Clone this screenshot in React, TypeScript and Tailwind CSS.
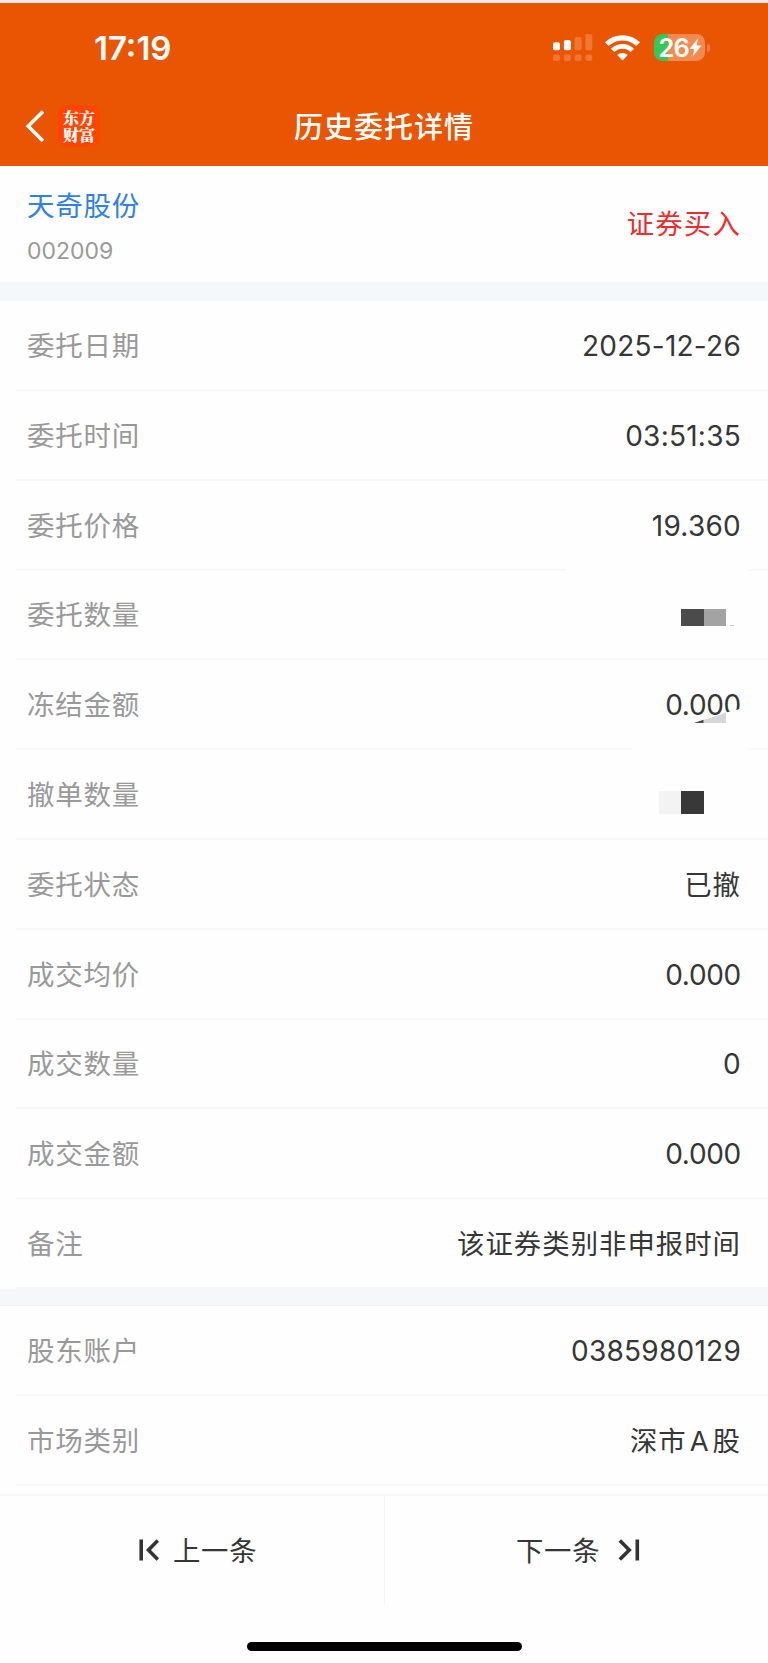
import type { ReactNode } from 'react'
import clsx from 'clsx'

interface Row {
  label: string
  value?: ReactNode
  // extra content drawn over the row (masked amounts)
  overlay?: ReactNode
}

const orderRows: Row[] = [
  { label: '委托日期', value: '2025-12-26' },
  { label: '委托时间', value: '03:51:35' },
  {
    label: '委托价格',
    value: '19.360',
    overlay: <div className="absolute right-[20px] -bottom-px w-[182px] h-[4px] bg-[#fefefe]" />,
  },
  { label: '委托数量', overlay: <QuantityMask /> },
  { label: '冻结金额', value: '0.000', overlay: <FrozenMask /> },
  { label: '撤单数量', overlay: <CancelMask /> },
  { label: '委托状态', value: '已撤' },
  { label: '成交均价', value: '0.000' },
  { label: '成交数量', value: '0' },
  { label: '成交金额', value: '0.000' },
  { label: '备注', value: '该证券类别非申报时间' },
]

const accountRows: Row[] = [
  { label: '股东账户', value: '0385980129' },
  {
    label: '市场类别',
    value: (
      <>
        深市<span className="mx-[3px]">A</span>股
      </>
    ),
  },
]

function QuantityMask() {
  return (
    <div className="absolute right-[34px] top-[38.5px] w-[53px] h-[18px]">
      <div className="flex">
        <div className="w-[22.5px] h-[16.5px] bg-[#4b4b4b]" />
        <div className="w-[22.5px] h-[16.5px] bg-[#a3a3a3]" />
      </div>
      <div className="absolute left-[49px] top-[16px] w-[4px] h-px bg-[#cfcfcf]" />
    </div>
  )
}

function FrozenMask() {
  return (
    <>
      <svg className="absolute right-[20px] top-[45.5px]" width="62" height="20" viewBox="0 0 62 20">
        <path d="M8 17 L40 6.4 L62 1 V20 H8 Z" fill="#fefefe" />
        <path d="M8 17 L40 6.8 V17 Z" fill="#d6d6d6" />
        <path d="M8 17 L17.5 13.8 V17 Z" fill="#4a4a4a" />
      </svg>
      <div className="absolute right-[20px] -bottom-px w-[116px] h-[4px] bg-[#fefefe]" />
    </>
  )
}

function CancelMask() {
  return (
    <div className="absolute right-[64.5px] top-[41px] flex">
      <div className="w-[22.5px] h-[23px] bg-[#f3f3f3]" />
      <div className="w-[22.5px] h-[23px] bg-[#383838]" />
    </div>
  )
}

function valueClass(value: ReactNode) {
  if (typeof value === 'string' && /^[\d.:-]+$/.test(value)) {
    return clsx('pt-[2px] text-[28px]', value.startsWith('0.') ? 'tracking-[-0.3px]' : 'tracking-[0.25px]')
  }
  return 'pt-[3px] text-[27.4px] tracking-[1px]'
}

function DetailRow({ label, value, overlay }: Row) {
  return (
    <div className="relative h-[89.8px] pl-4">
      <div className="h-full flex items-center justify-between pl-[11px] pr-[27px] border-b-2 border-[#f8f8f8]">
        <span className="pt-[3px] text-[27.5px] tracking-[0.75px] text-[#999999]">{label}</span>
        {value && <span className={clsx('text-[#363636]', valueClass(value))}>{value}</span>}
      </div>
      {overlay}
    </div>
  )
}

function SignalIcon() {
  return (
    <svg width="40" height="28" viewBox="0 0 40 28" fill="#fff">
      <rect x="0" y="8.3" width="7" height="8" rx="2" />
      <rect x="10.9" y="6" width="7" height="10.3" rx="2" />
      <rect x="21.6" y="3" width="7" height="13.3" rx="2" fillOpacity="0.2" />
      <rect x="32.3" y="0" width="7" height="16.3" rx="2" fillOpacity="0.2" />
      {[0, 10.9, 21.6, 32.3].map((x) => (
        <rect key={x} x={x} y="20.5" width="7" height="6.5" rx="2" fillOpacity="0.2" />
      ))}
    </svg>
  )
}

function WifiIcon() {
  return (
    <svg width="35" height="26" viewBox="0 0 35 26" fill="none">
      <path d="M1.8 9.2 A22.4 22.4 0 0 1 33.2 9.2" stroke="#fff" strokeWidth="5.2" />
      <path d="M7.6 15.4 A14 14 0 0 1 27.4 15.4" stroke="#fff" strokeWidth="4.8" />
      <path d="M12.2 20.1 A7.6 7.6 0 0 1 22.8 20.1 L17.5 25.6 Z" fill="#fff" />
    </svg>
  )
}

function Battery() {
  return (
    <div className="flex items-center gap-[2px]">
      <div className="w-[51px] h-[27px] rounded-[8.5px] flex items-center pl-[4.5px] text-white bg-[linear-gradient(to_right,#34c759_14px,#f38b51_14px)]">
        <span className="text-[25.5px] leading-[27px] font-semibold tracking-[-0.8px]">26</span>
        <svg className="shrink-0" width="13" height="19" viewBox="0 0 12 19" fill="#fff">
          <path d="M8.8 0 L0 10.9 H4.9 L3 18.8 L12 7.6 H7 Z" />
        </svg>
      </div>
      <div className="w-[3px] h-[8px] rounded-r-full bg-[#f07c3c]" />
    </div>
  )
}

function Header() {
  return (
    <header className="h-[162.5px] bg-[#ea5504] text-white">
      <div className="h-[84px] pt-[5px] flex items-center justify-between pl-[94px] pr-[58px]">
        <span className="pt-[1px] text-[33px] font-semibold leading-none">17:19</span>
        <div className="flex items-center">
          <SignalIcon />
          <div className="ml-[12px]">
            <WifiIcon />
          </div>
          <div className="ml-[14px]">
            <Battery />
          </div>
        </div>
      </div>
      <div className="h-[78px] flex items-center justify-between px-6">
        <div className="w-[120px] flex items-center">
          <svg width="22" height="34" viewBox="0 0 22 34" fill="none" stroke="#fff" strokeWidth="3.6">
            <path d="M19 2.5 L4.2 17.2 L19 32" />
          </svg>
          <div className="ml-[12px] w-[42px] h-[42px] rounded-[9px] bg-[#ff4500] flex items-center justify-center">
            <span className="w-[32px] text-[16px] leading-[17.5px] break-all font-black font-['Noto_Serif_CJK_SC','Noto_Sans_CJK_SC',serif]">
              东方财富
            </span>
          </div>
        </div>
        <h1 className="pt-[3px] text-[29px] font-medium tracking-[1px]">历史委托详情</h1>
        <div className="w-[120px]" />
      </div>
    </header>
  )
}

export default function App() {
  return (
    <div className="w-[768px] h-[1663px] overflow-hidden flex flex-col bg-[#fefefe] font-['Inter','Noto_Sans_CJK_SC',sans-serif]">
      <div className="h-[3px] shrink-0 bg-[#ececec]" />
      <Header />

      <section className="h-[116.5px] flex items-center justify-between pl-[27px] pr-[27px]">
        <div className="flex flex-col pt-[5px]">
          <span className="text-[27.5px] leading-[40px] tracking-[0.75px] text-[#2f80e7]">天奇股份</span>
          <span className="mt-[10px] text-[23px] leading-[30px] text-[#999999]">002009</span>
        </div>
        <span className="pt-[2px] text-[27.4px] tracking-[1.2px] text-[#f12b2b]">证券买入</span>
      </section>

      <div className="h-[19.2px] bg-[#f4f8fa]" />
      {orderRows.map((row) => (
        <DetailRow key={row.label} {...row} />
      ))}

      <div className="h-[17.2px] bg-[#f4f8fa] border-b border-[#f0f2f3]" />
      {accountRows.map((row) => (
        <DetailRow key={row.label} {...row} />
      ))}

      <footer className="mt-[8px] border-t-2 border-[#f8f8f8] flex-1 flex flex-col">
        <div className="h-[109px] grid grid-cols-[385px_1fr] text-[27.4px] tracking-[0.7px] text-[#363636]">
          <div className="flex items-center pl-[138px] border-r border-[#f4f4f4]">
            <svg width="22" height="22" viewBox="0 0 22 22" fill="none" stroke="#333" strokeWidth="3.6">
              <path d="M3.2 0.5 V21.5 M19.8 1.5 L10.5 11 L19.8 20.5" />
            </svg>
            <span className="ml-[13px] pt-[2px]">上一条</span>
          </div>
          <div className="flex items-center pl-[131px]">
            <span className="pt-[2px]">下一条</span>
            <svg className="ml-[18px]" width="22" height="22" viewBox="0 0 22 22" fill="none" stroke="#333" strokeWidth="3.6">
              <path d="M19.3 0.5 V21.5 M1.8 1.5 L11.3 11 L1.8 20.5" />
            </svg>
          </div>
        </div>
        <div className="mt-[37px] mx-auto w-[275px] h-[9px] rounded-full bg-black" />
      </footer>
    </div>
  )
}
